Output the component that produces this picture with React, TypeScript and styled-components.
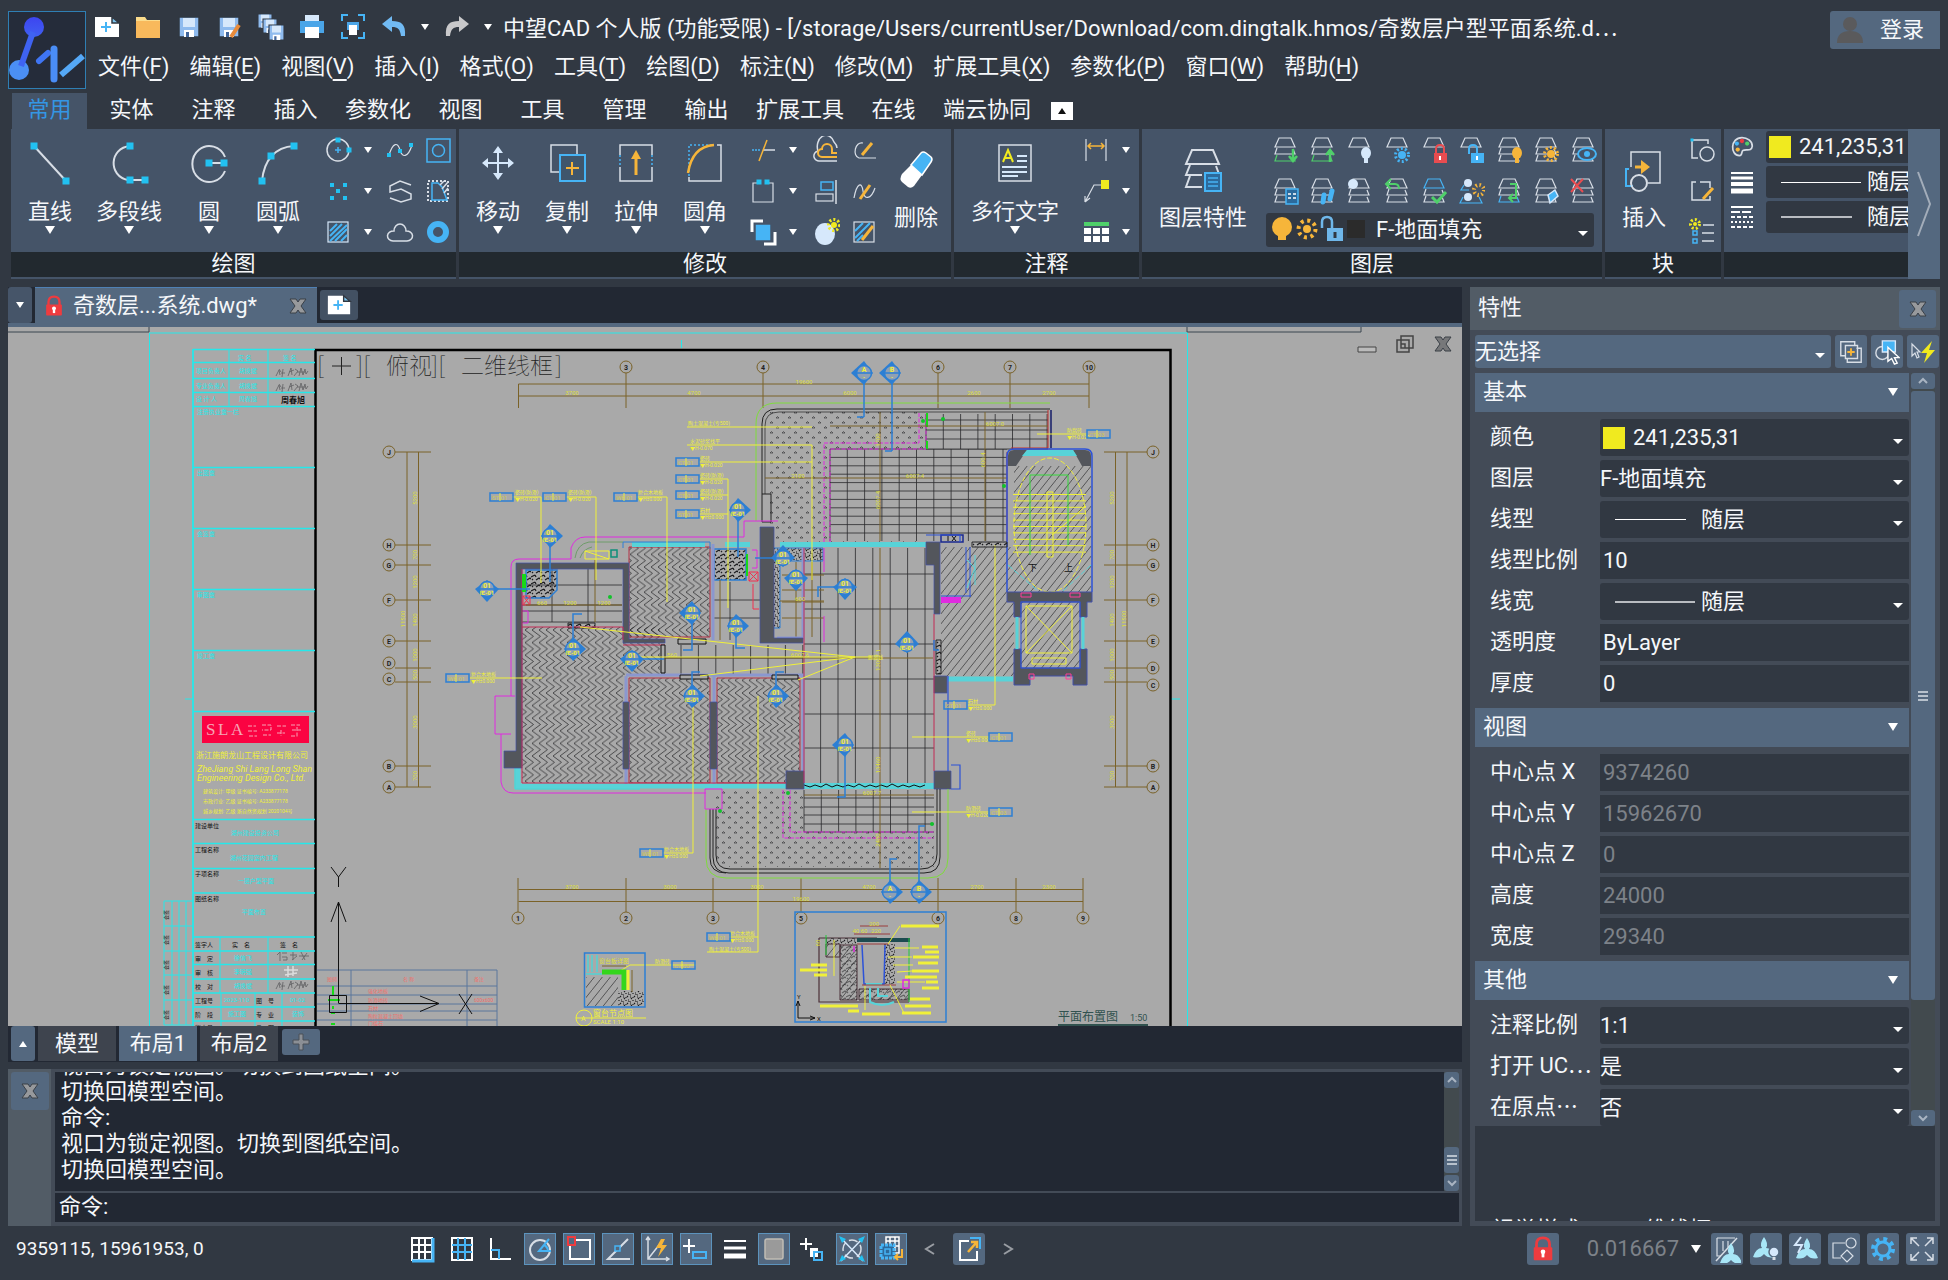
import React, { ReactNode, useState } from "react";
import styled, { createGlobalStyle } from "styled-components";

const c = {
  bg: "#313842",
  dark: "#222833",
  ribbon: "#455468",
  caption: "#22292f",
  accent: "#54687f",
  strip: "#525c66",
  panel: "#434b57",
  text: "#f5f7fa",
  dim: "#7d8289",
  cyan: "#22c1f1",
  sky: "#46b4f5",
  pale: "#d6e8fb",
  orange: "#f6b53a",
  yellow: "#f0ea1f",
  green: "#4fd06a",
  red: "#ee3b3f",
  line: "#d8dee6",
};
const sans = `Roboto, "Noto Sans CJK SC", sans-serif`;
const cjk = `"Noto Sans CJK SC", sans-serif`;

const Global = createGlobalStyle`
  *, *::before, *::after { box-sizing: border-box; }
  body { margin: 0; background: ${c.bg}; color: ${c.text}; font-family: ${sans}; font-size: 22px; line-height: 28px; }
  button, input, select { font: inherit; color: inherit; border: 0; margin: 0; padding: 0; background: none; border-radius: 0; }
  button { cursor: pointer; }
  svg { display: block; }
`;

/* ---------- shared parts ---------- */

const Ico = ({ size, box = size, children }: { size: number; box?: number; children: ReactNode }) => (
  <svg width={size} height={size} viewBox={`0 0 ${box} ${box}`} fill="none" stroke={c.line} strokeWidth={1.5} aria-hidden="true">
    {children}
  </svg>
);

const Triangle = styled.span<{ $up?: boolean; $small?: boolean }>`
  display: block;
  width: 0;
  height: 0;
  border: solid transparent;
  border-width: ${(p) => (p.$small ? "6px 4px" : "8px 5px")};
  ${(p) => (p.$up ? "border-top-width: 0; border-bottom-color: #fff;" : "border-bottom-width: 0; border-top-color: #fff;")}
`;

const Ellipsis = styled.span`
  font-family: ${cjk};
  line-height: 1;
`;

const Cross = ({ color = "#97999c" }: { color?: string }) => (
  <Ico size={20}>
    <path d="M2 3h6l2 3 2-3h6l-5 7 5 7h-6l-2-3-2 3H2l5-7z" fill={color} stroke="#3b4047" strokeWidth={1} />
  </Ico>
);

/* ---------- page frame ---------- */

const Page = styled.div`
  min-height: 100vh;
  display: flex;
  flex-direction: column;
  padding: 11px 8px 0;
`;

const Header = styled.header`
  display: flex;
  height: 82px;
`;
const Logo = styled.div`
  width: 78px;
  height: 78px;
  flex: none;
  border: 1px solid #2f7fb4;
  background: #252c3a;
`;
const HeadRows = styled.div`
  flex: 1;
  min-width: 0;
`;
const TopRow = styled.div`
  display: flex;
  align-items: center;
  height: 38px;
`;
const QuickBar = styled.div`
  display: flex;
  padding-bottom: 6px;
`;
const QuickButton = styled.button<{ $narrow?: boolean }>`
  width: ${(p) => (p.$narrow ? 22 : 41)}px;
  height: 28px;
  display: grid;
  place-items: center;
`;
const Title = styled.h1`
  flex: 1;
  min-width: 0;
  margin: 0 0 0 4px;
  padding-bottom: 2px;
  font-size: 22px;
  font-weight: 400;
  line-height: 34px;
  white-space: nowrap;
  overflow: hidden;
`;
const Login = styled.button`
  width: 110px;
  height: 38px;
  background: ${c.accent};
  border-radius: 3px 0 0 3px;
  display: flex;
  align-items: center;
  justify-content: space-between;
  padding: 0 16px 0 5px;
`;
const MenuBar = styled.nav`
  display: flex;
  gap: 20px;
  height: 36px;
  align-items: center;
  padding-left: 12px;
`;
const MenuItem = styled.button`
  white-space: nowrap;
  u {
    text-underline-offset: 5px;
    text-decoration-thickness: 2px;
  }
`;

const Tabs = styled.div`
  display: flex;
  gap: 7px;
  padding-left: 4px;
  align-items: center;
`;
const Tab = styled.button<{ $on?: boolean }>`
  min-width: 75px;
  height: 36px;
  padding: 0 5px 2px;
  white-space: nowrap;
  color: ${(p) => (p.$on ? "#3496e4" : c.text)};
  background: ${(p) => (p.$on ? c.ribbon : "transparent")};
`;
const Collapse = styled.button`
  width: 22px;
  height: 18px;
  margin-left: 8px;
  background: #fff;
  display: grid;
  place-items: center;
  span {
    border-bottom-color: #111;
  }
`;

/* ---------- ribbon ---------- */

const Ribbon = styled.div`
  display: flex;
  gap: 3px;
  padding-left: 3px;
`;
const Panel = styled.section<{ $w?: number }>`
  ${(p) => (p.$w ? `width: ${p.$w}px; flex: none;` : "flex: 1; min-width: 0; overflow: hidden; margin-right: -3px;")}
  background: ${c.ribbon};
  padding-bottom: 2px;
`;
const PanelBody = styled.div`
  display: flex;
  height: 123px;
`;
const Caption = styled.h2`
  margin: 0;
  height: 25px;
  line-height: 24px;
  font-size: 22px;
  font-weight: 400;
  text-align: center;
  background: ${c.caption};
`;
const BigBtn = styled.button<{ $w: number; $low?: boolean }>`
  width: ${(p) => p.$w}px;
  flex: none;
  display: flex;
  flex-direction: column;
  align-items: center;
  padding-top: ${(p) => (p.$low ? 17 : 11)}px;
  white-space: nowrap;
`;
const BigLabel = styled.span`
  margin-top: 12px;
  line-height: 28px;
`;
const SmallGrid = styled.div<{ $cols: string; $left?: number }>`
  display: grid;
  grid-template-columns: ${(p) => p.$cols};
  grid-template-rows: repeat(3, 41px);
  margin-left: ${(p) => p.$left ?? 0}px;
`;
const SmallBtn = styled.button`
  display: grid;
  place-items: center;
`;

const Big = ({ w, label, icon, menu = true }: { w: number; label: string; icon: ReactNode; menu?: boolean }) => (
  <BigBtn $w={w} $low={!menu}>
    <Ico size={46}>{icon}</Ico>
    <BigLabel>{label}</BigLabel>
    {menu && <Triangle />}
  </BigBtn>
);
const Small = ({ label, icon }: { label: string; icon: ReactNode }) => (
  <SmallBtn aria-label={label}>
    <Ico size={28}>{icon}</Ico>
  </SmallBtn>
);
const More = ({ label }: { label: string }) => (
  <SmallBtn aria-label={`${label}选项`}>
    <Triangle $small />
  </SmallBtn>
);

const Node = ({ x, y, s = 7 }: { x: number; y: number; s?: number }) => (
  <rect x={x - s / 2} y={y - s / 2} width={s} height={s} fill={c.cyan} stroke="none" />
);

const bigIcons = {
  line: (<><path d="M7 6l32 35" strokeWidth={2} /><Node x={7} y={6} /><Node x={39} y={41} /></>),
  polyline: (<><path d="M24 6C3 8 2 36 22 40h17" strokeWidth={2} /><Node x={24} y={6} /><Node x={24} y={40} /><Node x={39} y={40} /></>),
  circle: (<><path d="M39 17A17 18 0 1 0 39 31" strokeWidth={2} /><path d="M22 23h16" strokeWidth={2} /><Node x={23} y={23} /><Node x={38} y={23} /></>),
  arc: (<><path d="M7 41C9 20 20 7 39 6" strokeWidth={2} /><Node x={7} y={41} /><Node x={16} y={16} /><Node x={39} y={6} /></>),
  move: (<path d="M23 6l-5 7h4v9h-9v-4l-6 5 6 5v-4h9v9h-4l5 7 5-7h-4v-9h9v4l6-5-6-5v4h-9v-9h4z" fill={c.pale} stroke="none" />),
  copy: (<><path d="M33 15V5H7v27h8" /><rect x="16" y="15" width="25" height="26" fill="#3f566c" stroke={c.sky} strokeWidth={2} /><path d="M28 22v13M22 28h13" stroke={c.orange} strokeWidth={2} /></>),
  stretch: (<><path d="M7 15V5h32v10M7 27v14h32V27" /><path d="M7 15v12M39 15v12" stroke={c.sky} strokeDasharray="2 2" /><path d="M23 35V16" stroke={c.orange} strokeWidth={3} /><path d="M18 19l5-9 5 9z" fill={c.orange} stroke="none" /></>),
  fillet: (<><path d="M7 37v4h32V5h-4" strokeWidth={1.5} /><path d="M7 36V5h24" stroke={c.sky} strokeDasharray="2 2" /><path d="M6 33C9 14 18 6 32 5" stroke={c.orange} strokeWidth={2.5} /></>),
  erase: (<><path d="M9 28l9-9 11 10-8 11q-3 3-6 1l-6-5q-3-3 0-8z" fill="#fff" stroke="none" /><path d="M18 19L28 7q2-2 5 0l5 4q2 2 0 5l-9 13z" fill={c.sky} stroke="#fff" /></>),
  mtext: (<><rect x="7" y="5" width="32" height="36" strokeWidth={1.5} /><path d="M11 22l5-12 5 12M12 18h8" stroke={c.yellow} strokeWidth={2} /><path d="M25 16h10M25 21h10M10 27h25M10 32h25M10 36h16" stroke={c.pale} strokeWidth={2} /></>),
  layers: (<><path d="M12 4h21l6 14H6zM10 19l-4 10h16M10 30L6 41h16M36 20l3 8" strokeWidth={2} /><rect x="25" y="27" width="16" height="18" fill="#2c6a9c" stroke={c.sky} strokeWidth={2} /><path d="M28 32h10M28 36h10M28 40h10" stroke={c.sky} /></>),
  insert: (<><path d="M10 21V6h29v31H27" strokeWidth={1.5} /><path d="M8 23H5v17h7" stroke={c.sky} strokeWidth={2} /><circle cx="18" cy="37" r="8" strokeWidth={2} /><path d="M14 21h10" stroke={c.orange} strokeWidth={3} /><path d="M20 14l9 7-9 7z" fill={c.orange} stroke="none" /></>),
};

const trap = (y: number) => `M8 ${y}h12l4 9H4z`;
const Stack = ({ n = 3, tint, low, children }: { n?: number; tint?: string; low?: string; children?: ReactNode }) => (
  <>
    <path d={trap(2)} strokeWidth={1.2} stroke={tint || c.line} />
    {n > 1 && <path d="M6 12l-2 6h20l-2-5" strokeWidth={1.2} />}
    {n > 2 && <path d="M6 19l-2 6h20l-2-5" strokeWidth={1.2} stroke={low || tint || c.line} />}
    {children}
  </>
);
const Bulb = ({ x, y, fill }: { x: number; y: number; fill: string }) => (
  <g stroke="none" fill={fill}><ellipse cx={x} cy={y} rx="5" ry="6" /><rect x={x - 2} y={y + 5} width="4" height="5" /></g>
);
const Sun = ({ x, y, r = 4, fill }: { x: number; y: number; r?: number; fill: string }) => (
  <g stroke={fill}><circle cx={x} cy={y} r={r} fill={fill} stroke="none" /><circle cx={x} cy={y} r={r + 2.5} strokeDasharray="2 2.1" strokeWidth={3} /></g>
);
const Padlock = ({ x, y, fill, open }: { x: number; y: number; fill: string; open?: boolean }) => (
  <g><path d={open ? `M${x - 8} ${y + 1}v-5q0-4 4-4t4 4v4` : `M${x - 4} ${y}v-4q0-4 4-4t4 4v4`} stroke={fill} strokeWidth={2} /><rect x={x - 6} y={y} width="13" height="10" fill={fill} stroke="none" /><path d={`M${x} ${y + 3}v4`} stroke="#fff" strokeWidth={2} /></g>
);
const Pen = ({ d = "M10 22L22 6" }: { d?: string }) => <path d={d} stroke={c.orange} strokeWidth={3} />;

const s = {
  circle2: (<><circle cx="14" cy="14" r="11" /><path d="M14 11v6M11 14h6" stroke={c.sky} /><Node x={14} y={4} s={5} /><Node x={25} y={14} s={5} /></>),
  spline: (<><path d="M3 19C7 6 12 6 14 14s8 8 12-5" strokeWidth={1.2} /><Node x={3} y={19} s={4} /><Node x={14} y={15} s={4} /><Node x={25} y={9} s={4} /></>),
  region: (<><rect x="3" y="3" width="23" height="23" stroke={c.sky} /><circle cx="14.5" cy="14.5" r="6" stroke={c.sky} /></>),
  points: (<><Node x={8} y={8} s={4} /><Node x={21} y={8} s={4} /><Node x={14} y={14} s={4} /><Node x={8} y={21} s={4} /><Node x={21} y={21} s={4} /></>),
  helix: <path d="M25 8L14 4 4 9v6l11-3 10 5v5l-10 3-11-4" />,
  boundary: (<><rect x="4" y="4" width="20" height="20" strokeDasharray="2 2" strokeWidth={2} /><path d="M8 6v17h15l-5-13-4-4z" fill={c.ribbon} stroke={c.sky} /><path d="M16 8l4-4M18 12l6-7M20 16l4-5" /></>),
  hatch: (<><rect x="4" y="4" width="20" height="20" stroke={c.pale} strokeWidth={1.2} /><path d="M6 13l7-7M6 18L18 6M6 23L23 7M11 23l12-12M17 23l6-6" stroke={c.sky} strokeWidth={2} /></>),
  cloud: <path d="M7 23a6 5 0 0 1 1-10 6 7 0 0 1 12 0 6 5 0 0 1 1 10z" />,
  donut: <circle cx="14" cy="14" r="8" stroke={c.sky} strokeWidth={6} />,
  trim: (<><path d="M3 14h9" stroke={c.sky} strokeDasharray="2 1" /><path d="M14 14h12" /><path d="M10 25L18 4" stroke={c.orange} /></>),
  array: (<><path d="M8 6H4v19h20V6h-4" strokeWidth={1.2} /><Node x={10} y={5} s={5} /><Node x={18} y={5} s={5} /></>),
  order: (<><path d="M3 14V3h11M26 14v12H15" stroke="#fff" strokeWidth={3} /><rect x="6" y="6" width="16" height="17" fill={c.sky} stroke={c.ribbon} /></>),
  offset: (<><path d="M25 25H8a5 5 0 0 1-2-10 7 9 0 0 1 16-9q3 3 3 6" /><path d="M25 21H10a4 4 0 0 1 0-8 5 5 0 0 1 10 0v4h5" stroke={c.orange} strokeWidth={2} /></>),
  align: (<><rect x="9" y="5" width="12" height="8" stroke={c.sky} /><rect x="4" y="17" width="17" height="7" strokeWidth={1.2} /><path d="M24 3v24" /></>),
  explode: (<><ellipse cx="13" cy="16" rx="10" ry="11" fill={c.pale} stroke="none" /><Sun x={22} y={7} r={3} fill={c.yellow} /></>),
  editPoly: (<><path d="M13 7C5 5 2 20 9 22h17" strokeWidth={1.2} /><Pen d="M12 19L22 7" /></>),
  editSpline: (<><path d="M4 21C7 5 12 5 13 14s8 9 12-3" strokeWidth={1.2} /><Pen d="M10 22L20 8" /></>),
  editHatch: (<><rect x="4" y="4" width="20" height="20" strokeWidth={1.2} /><path d="M5 13l8-8M5 20L20 5M7 23l6-6" stroke={c.sky} strokeWidth={2} /><Pen d="M12 22L23 8" /></>),
  dim: (<><path d="M4 3v22M24 3v22" strokeWidth={1.2} /><path d="M6 10h16M9 7l-3 3 3 3M19 7l3 3-3 3" stroke={c.orange} /></>),
  leader: (<><path d="M3 25l9-17h8M3 25v-6M3 25l5-4" strokeWidth={1.2} /><rect x="19" y="3" width="8" height="9" fill={c.yellow} stroke="none" /></>),
  table: (<g stroke="none"><rect x="2" y="4" width="25" height="4" fill={c.green} /><path d="M2 10h7v6H2zM11 10h7v6h-7zM20 10h7v6h-7zM2 18h7v6H2zM11 18h7v6h-7zM20 18h7v6h-7z" fill="#fff" /></g>),
};

const layerIcons: [string, ReactNode][] = [
  ["图层下移", <Stack low={c.green}><path d="M22 13v10M18 20l4 5 4-5" stroke={c.green} strokeWidth={2.5} /></Stack>],
  ["图层上移", <Stack low={c.green}><path d="M22 26V16M18 19l4-5 4 5" stroke={c.green} strokeWidth={2.5} /></Stack>],
  ["关闭图层", <Stack n={1}><Bulb x={21} y={17} fill={c.pale} /></Stack>],
  ["冻结图层", <Stack n={1}><Sun x={19} y={19} fill={c.sky} /></Stack>],
  ["锁定图层", <Stack n={1}><Padlock x={20} y={17} fill="#e84c50" /></Stack>],
  ["解锁图层", <Stack n={1}><Padlock x={20} y={17} fill={c.sky} open /></Stack>],
  ["打开图层", <Stack><Bulb x={22} y={17} fill={c.orange} /></Stack>],
  ["解冻图层", <Stack><Sun x={19} y={18} fill={c.orange} /></Stack>],
  ["隔离图层", <Stack><ellipse cx="18" cy="18" rx="9" ry="6" fill={c.ribbon} stroke={c.sky} strokeWidth={2} /><circle cx="18" cy="18" r="3" fill={c.sky} stroke="none" /></Stack>],
  ["图层状态", <Stack><rect x="15" y="12" width="12" height="15" fill="#2c6a9c" stroke={c.sky} /><path d="M17 17h3M22 17h3M17 21h3M22 21h3" stroke="#fff" /></Stack>],
  ["图层漫游", <Stack><path d="M16 18l-1 7M24 14l-2 8" stroke={c.sky} strokeWidth={5} strokeLinecap="round" /></Stack>],
  ["匹配图层", <Stack><circle cx="8" cy="7" r="5" fill={c.pale} stroke="none" /></Stack>],
  ["上一图层", <Stack><path d="M8 2L3 7l5 5M4 7h8q4 0 4 5" stroke={c.green} strokeWidth={2} /></Stack>],
  ["置为当前", <Stack tint={c.sky} low={c.line}><path d="M12 20l5 5 9-10" stroke={c.green} strokeWidth={3} /></Stack>],
  ["图层合并", <><path d="M7 8l-3 5h8M6 20l-3 6h22l-3-6" strokeWidth={1.2} stroke={c.sky} /><circle cx="11" cy="6" r="4" fill={c.pale} stroke="none" /><circle cx="11" cy="20" r="4" fill={c.pale} stroke="none" /><circle cx="22" cy="13" r="5" stroke={c.orange} strokeWidth={4} strokeDasharray="1.5 2.4" /></>],
  ["移至图层", <Stack low={c.sky}><path d="M15 7h6v14h-6M18 17l-4 4 4 4" stroke={c.green} strokeWidth={2} /></Stack>],
  ["复制到图层", <Stack><path d="M16 18l7-5 3 6-8 7z" fill={c.sky} stroke={c.pale} /></Stack>],
  ["删除图层", <Stack><path d="M2 2l12 13M14 2L2 15" stroke="#e84c50" strokeWidth={2} /></Stack>],
];

const LayerArea = styled.div`
  flex: 1;
  padding: 0 8px 0 2px;
`;
const LayerGrid = styled.div`
  display: grid;
  grid-template-columns: repeat(9, 1fr);
  grid-template-rows: 41px 41px;
  margin: 0 -8px 2px 0;
`;
const Field = styled.div<{ $h?: number; $flat?: boolean; $blue?: boolean }>`
  position: relative;
  display: flex;
  align-items: center;
  height: ${(p) => p.$h ?? 37}px;
  min-width: 0;
  flex: 1;
  background: ${(p) => (p.$blue ? c.accent : c.bg)};
  border-radius: ${(p) => (p.$flat ? 0 : 3)}px;
`;
const Caret = styled.span`
  position: absolute;
  right: 6px;
  top: calc(50% + 1px);
  border: 5px solid transparent;
  border-bottom-width: 0;
  border-top-color: #fff;
  pointer-events: none;
`;
const Select = styled.select`
  appearance: none;
  flex: 1;
  min-width: 0;
  height: 100%;
  padding: 0 16px 0 0;
`;
const Swatch = styled.span`
  width: 22px;
  height: 22px;
  flex: none;
  margin: 0 8px 0 3px;
  background: ${c.yellow};
`;
const LineSlot = styled.span<{ $len: number; $thick?: boolean }>`
  width: 86px;
  flex: none;
  margin-left: 15px;
  &::before {
    content: "";
    display: block;
    width: ${(p) => p.$len}px;
    height: ${(p) => (p.$thick ? 2 : 1)}px;
    background: ${(p) => (p.$thick ? "#b9bcc1" : "#fff")};
  }
`;
const PropFields = styled.div`
  display: grid;
  grid-template-columns: 24px 190px;
  grid-template-rows: repeat(3, 32px);
  gap: 3px 12px;
  padding: 2px 0 0 6px;
  align-items: center;
`;
const ScrollRight = styled.button`
  width: 32px;
  flex: none;
  background: ${c.accent};
  display: grid;
  place-items: center;
  position: relative;
`;

/* ---------- work area ---------- */

const Work = styled.main`
  flex: 1;
  display: flex;
  gap: 8px;
  padding-top: 8px;
`;
const Left = styled.div`
  flex: 1;
  min-width: 0;
  display: flex;
  flex-direction: column;
`;
const DocBar = styled.div`
  display: flex;
  gap: 3px;
  height: 40px;
  background: ${c.dark};
  border-bottom: 4px solid ${c.accent};
`;
const DocMenu = styled.button`
  width: 24px;
  height: 36px;
  background: #465569;
  border-radius: 3px;
  display: grid;
  place-items: center;
`;
const DocTab = styled.div`
  width: 282px;
  height: 40px;
  background: ${c.accent};
  border-top: 1px solid #4f80b4;
  display: flex;
  align-items: center;
  padding: 0 9px 4px 8px;
`;
const DocName = styled.button`
  flex: 1;
  display: flex;
  align-items: center;
  gap: 8px;
  white-space: nowrap;
`;
const SquareBtn = styled.button<{ $w: number; $h: number }>`
  width: ${(p) => p.$w}px;
  height: ${(p) => p.$h}px;
  flex: none;
  background: ${c.accent};
  border-radius: 3px;
  display: grid;
  place-items: center;
`;
const NewDoc = styled(SquareBtn)`
  background: #435163;
  margin-top: 3px;
`;
const NewLayout = styled(SquareBtn)`
  margin: 3px 0 0 1px;
`;
const Canvas = styled.div`
  position: relative;
  flex: 1;
  min-height: 500px;
  background: #a9a9a9;
  overflow: hidden;
  > svg {
    position: absolute;
    inset: 0;
    width: 100%;
    height: 100%;
  }
`;
const WinButtons = styled.div`
  position: absolute;
  top: 5px;
  right: 5px;
  display: flex;
  gap: 10px;
  button {
    width: 28px;
    height: 24px;
    display: grid;
    place-items: center;
  }
`;
const LayoutBar = styled.div`
  display: flex;
  gap: 3px;
  height: 36px;
  padding-left: 3px;
  background: ${c.dark};
`;
const LayoutTab = styled.button<{ $on?: boolean }>`
  width: 78px;
  height: 35px;
  background: ${(p) => (p.$on ? c.accent : "#3e444e")};
`;
const Command = styled.section`
  display: flex;
  height: 157px;
  margin-top: 7px;
  background: ${c.panel};
`;
const CommandSide = styled.div`
  width: 43px;
  background: ${c.strip};
  padding: 3px;
`;
const CommandBody = styled.div`
  flex: 1;
  padding: 3px 3px 4px 4px;
`;
const History = styled.div`
  height: 119px;
  background: ${c.dark};
  display: flex;
`;
const Lines = styled.div`
  flex: 1;
  display: flex;
  flex-direction: column;
  justify-content: flex-end;
  overflow: hidden;
  padding: 0 6px 8px;
  line-height: 26px;
  p {
    margin: 0;
    flex: none;
  }
`;
const Prompt = styled.label`
  display: flex;
  height: 29px;
  margin-top: 2px;
  padding-left: 4px;
  background: ${c.dark};
  line-height: 27px;
  input {
    flex: 1;
    outline: 0;
  }
`;
const Scroll = styled.div<{ $w: number }>`
  width: ${(p) => p.$w}px;
  flex: none;
  display: flex;
  flex-direction: column;
  background: #424a4e;
`;
const ScrollBtn = styled.button`
  height: 16px;
  flex: none;
  background: ${c.accent};
  border-radius: 3px;
  display: grid;
  place-items: center;
`;
const Thumb = styled.div<{ $size: number }>`
  flex: ${(p) => p.$size} 0 0;
  background: ${c.accent};
  border-radius: 3px;
  display: grid;
  place-items: center;
  margin: 2px 0;
`;
const Spring = styled.div<{ $n: number }>`
  flex: ${(p) => p.$n} 0 0;
`;
const Chevron = ({ up }: { up?: boolean }) => (
  <Ico size={14}><path d={up ? "M3 9l4-4 4 4" : "M3 5l4 4 4-4"} strokeWidth={2} stroke="#a9b4c2" /></Ico>
);
const Grip = () => (<Ico size={12}><path d="M1 2h10M1 6h10M1 10h10" strokeWidth={1.5} /></Ico>);

/* ---------- properties ---------- */

const Props = styled.aside`
  width: 470px;
  flex: none;
  display: flex;
  flex-direction: column;
  background: ${c.panel};
  padding-bottom: 5px;
`;
const PropsTitle = styled.div`
  display: flex;
  justify-content: space-between;
  align-items: center;
  height: 43px;
  padding: 0 4px 0 8px;
  background: ${c.strip};
  h2 {
    margin: 0;
    font-size: 22px;
    font-weight: 400;
    line-height: 36px;
    padding-bottom: 2px;
  }
`;
const PickRow = styled.div`
  display: flex;
  gap: 4px;
  padding: 5px 1px 5px 5px;
`;
const PropsBody = styled.div`
  display: flex;
  gap: 2px;
  padding: 0 5px;
`;
const Groups = styled.div`
  flex: 1;
  min-width: 0;
`;
const GroupHead = styled.button`
  width: 100%;
  height: 39px;
  display: flex;
  align-items: center;
  justify-content: space-between;
  padding: 0 11px 1px 8px;
  background: ${c.accent};
`;
const Rows = styled.div<{ $last?: boolean }>`
  display: grid;
  gap: 4px;
  padding: 7px 0 ${(p) => (p.$last ? 0 : 6)}px;
`;
const Row = styled.div`
  display: grid;
  grid-template-columns: 125px 1fr;
  align-items: center;
  label {
    height: 29px;
    padding: 0 0 1px 15px;
    white-space: nowrap;
    overflow: hidden;
  }
`;
const Value = styled.input`
  flex: 1;
  min-width: 0;
  height: 100%;
  padding: 0 3px;
  &:disabled {
    color: ${c.dim};
  }
`;
const Rest = styled.div`
  flex: 1;
  min-height: 0;
  margin: 0 5px;
  background: ${c.bg};
  display: flex;
  flex-direction: column;
  justify-content: flex-end;
  overflow: hidden;
`;
const CutRow = styled.div`
  display: grid;
  grid-template-columns: 131px 1fr;
  padding-left: 17px;
  height: 5px;
  overflow: hidden;
`;

/* ---------- status bar ---------- */

const Status = styled.footer`
  display: flex;
  align-items: center;
  height: 54px;
  padding: 0 2px 8px 8px;
`;
const Coords = styled.output`
  width: 391px;
  font-size: 19px;
`;
const StatusGroup = styled.div`
  display: flex;
  gap: 7px;
`;
const StatusBtn = styled.button<{ $on?: boolean; $flat?: boolean }>`
  width: 32px;
  height: 32px;
  display: grid;
  place-items: center;
  background: ${(p) => (p.$on || p.$flat ? c.accent : "transparent")};
  border: ${(p) => (p.$on ? "1px solid #5c93bd" : "0")};
  border-radius: ${(p) => (p.$flat ? 3 : 0)}px;
`;
const Spacer = styled.div`
  flex: 1;
`;
const Scale = styled.button`
  display: flex;
  align-items: center;
  gap: 12px;
  margin: 0 10px 0 28px;
  color: ${c.dim};
`;

/* ---------- drawing ---------- */

const AX = "#7a6228";
const YL = "#f0f03a";
const BL = "#2c7fd4";
const MG = "#e02be0";
const CY = "#25e8ea";
const GLASS = "#58d3d8";
const WALL = "#53565c";
const INK = "#2a2a2c";

const range = (from: number, to: number, step: number) => {
  const out: number[] = [];
  for (let v = from; v <= to + 0.01; v += step) out.push(Math.round(v * 10) / 10);
  return out;
};
const vlines = (xs: number[], y1: number, y2: number) => xs.map((x) => `M${x} ${y1}V${y2}`).join("");
const hlines = (ys: number[], x1: number, x2: number) => ys.map((y) => `M${x1} ${y}H${x2}`).join("");

const Bubble = ({ x, y, t }: { x: number; y: number; t: string }) => (
  <g>
    <circle cx={x} cy={y} r="6" stroke={AX} />
    <text x={x} y={y + 2.5} fontSize="7" fontWeight="700" fill="#222" stroke="none" textAnchor="middle">{t}</text>
  </g>
);
const Marker = ({ x, y, t, dir = 0 }: { x: number; y: number; t?: string; dir?: number }) => (
  <g>
    <path d={`M${x - 12} ${y}L${x} ${y + 13}L${x + 12} ${y}L${x} ${y - 9}z`} fill={BL} stroke="none" transform={`rotate(${dir} ${x} ${y})`} />
    <circle cx={x} cy={y} r="7.500" fill="#8fa0b4" stroke={BL} strokeWidth={1.500} />
    <path d={`M${x - 7} ${y}h14`} stroke={BL} strokeWidth={1.500} />
    <text x={x} y={y - 1} fontSize="7" fontWeight="700" fill={YL} stroke="none" textAnchor="middle">{t || "01"}</text>
    <text x={x} y={y + 6} fontSize="6" fontWeight="700" fill={YL} stroke="none" textAnchor="middle">{t ? "-" : "IE-01"}</text>
  </g>
);
const Tag = ({ x, y, t = "CT 01" }: { x: number; y: number; t?: string }) => (
  <g>
    <rect x={x} y={y} width="23" height="8" stroke={BL} strokeWidth={1.500} />
    <path d={`M${x + 10} ${y}v8`} stroke={YL} />
    <text x={x + 2} y={y + 6.5} fontSize="6" fill="#c9c95a" stroke="none">{t}</text>
  </g>
);
const Note = ({ x, y, t, sub }: { x: number; y: number; t: string; sub?: string }) => (
  <g fill={YL} stroke="none" fontSize="5">
    <text x={x} y={y - 1}>{t}</text>
    {sub && <text x={x} y={y + 6}>{sub}</text>}
  </g>
);
const Dim = ({ x, y, t, v }: { x: number; y: number; t: string; v?: boolean }) => (
  <text x={x} y={y} fontSize="6" fill="#dede3c" stroke="none" textAnchor="middle" transform={v ? `rotate(-90 ${x} ${y})` : undefined}>{t}</text>
);

const axisRows: [string, number][] = [["J", 452], ["H", 545], ["G", 565], ["F", 600], ["E", 641], ["D", 668], ["C", 682], ["B", 766], ["A", 787]];
const topAxis: [string, number][] = [["3", 626], ["4", 763], ["6", 938], ["7", 1010], ["10", 1089]];
const bottomAxis: [string, number][] = [["1", 518], ["2", 626], ["3", 713], ["5", 801], ["6", 938], ["8", 1016], ["9", 1083]];

const Patterns = () => (
  <defs>
    <pattern id="herring" width="7" height="12.600" patternUnits="userSpaceOnUse">
      <path d="M0 0l8.500 6.300L0 12.600M-7 0l8.500 6.300L-7 12.600" stroke="#2e2e30" strokeWidth="0.800" />
    </pattern>
    <pattern id="diag" width="8" height="10" patternUnits="userSpaceOnUse">
      <path d="M-1 11.2L9 -1.2M-5 6L4 -5M4 15L13 4" stroke="#3c3c3e" strokeWidth="0.800" />
    </pattern>
    <pattern id="dots" width="12" height="10" patternUnits="userSpaceOnUse">
      <path d="M2 3l1.500-1.500l1.500 1.500zM8 8l1.500-1.500l1.500 1.500z" stroke="#3c3c3e" strokeWidth="0.700" />
    </pattern>
    <pattern id="speck" width="7" height="7" patternUnits="userSpaceOnUse">
      <path d="M0 1h1M4 2l1 1M1 5l1-1M5 6h1M3 3v1M6 0v1M0 3h1M3 6v1" stroke="#1d1d20" strokeWidth="1.200" />
    </pattern>
    <pattern id="marble" width="9" height="7" patternUnits="userSpaceOnUse">
      <path d="M0 3l4-2M5 6l3-2 1 1M4 1l1 2M1 6l1-1" stroke="#1d1d20" strokeWidth="1.300" fill="none" />
    </pattern>
  </defs>
);

const Sheet = () => (
  <g>
    <path d="M8 332H149V327M1187 327v5h174v-5" stroke="#3b4650" />
    <path d="M149.500 1026V333H1187.500V1026M681.500 340v8M1171 699h9M185 699h8" stroke={CY} />
    <path d="M315.500 1026V350H1170.500V1026" stroke="#000" strokeWidth="2.500" />
    <path d="M193 1026V349" stroke={CY} strokeWidth="1.800" />
    <path d={hlines([349.5, 362.5, 378.5, 392.5, 406.5, 467.5, 528.5, 589.5, 650.5, 711.5, 819.5, 843.5, 868.5, 893, 937, 951, 964.5, 979, 993, 1007, 1021], 193, 315)} stroke={CY} strokeWidth="1.400" />
    <path d="M229 349V406M268 349V406M220 937V993M268 937V993M221 993V1026M255 993V1026M282 993V1026" stroke={CY} />
    <path d={vlines([164, 172, 179, 186], 901, 1025) + hlines([901, 926, 951, 975, 1000, 1025], 164, 193)} stroke={CY} />
    <g fill={CY} stroke="none" fontSize="6">
      <text x="238" y="360">实  名</text><text x="283" y="360">签  名</text>
      <text x="196" y="373">项目负责人</text><text x="239" y="373">胡焕斌</text>
      <text x="196" y="388">专业负责人</text><text x="239" y="388">胡焕斌</text>
      <text x="196" y="401">设 计 人</text><text x="239" y="401">周春旭</text>
      <text x="197" y="414">注册执业章一栏</text>
      <text x="197" y="475">出图章</text><text x="197" y="536">会签章</text><text x="197" y="597">审图章</text><text x="197" y="658">竣工章</text>
      <text x="231" y="835">湖州建设投资公司</text><text x="230" y="860">湖州花园室内工程</text>
      <text x="238" y="883">一层户型平面</text><text x="242" y="914">平面布置</text>
      <text x="234" y="960">徐信飞</text><text x="234" y="974">李明强</text><text x="234" y="988">胡焕斌</text>
      <text x="224" y="1002">2023-110</text><text x="290" y="1002">01-02</text>
      <text x="228" y="1016">施工图</text><text x="292" y="1016">装饰</text>
    </g>
    <g fill="#111" stroke="none" fontSize="6">
      <text x="195" y="828">建设单位</text><text x="195" y="852">工程名称</text><text x="195" y="876">子项名称</text><text x="195" y="901">图纸名称</text>
      <text x="195" y="947">签字人</text><text x="232" y="947">实</text><text x="244" y="947">名</text><text x="280" y="947">签</text><text x="292" y="947">名</text>
      <text x="195" y="961">审</text><text x="207" y="961">定</text><text x="195" y="975">审</text><text x="207" y="975">核</text><text x="195" y="989">校</text><text x="207" y="989">对</text>
      <text x="195" y="1003">工程号</text><text x="256" y="1003">图</text><text x="268" y="1003">号</text>
      <text x="195" y="1017">阶</text><text x="207" y="1017">段</text><text x="256" y="1017">专</text><text x="268" y="1017">业</text>
      <text x="195" y="1030">版本号</text><text x="256" y="1030">日</text><text x="268" y="1030">期</text>
      <text x="281" y="403" fontSize="8" fontWeight="700">周春旭</text>
      {[915, 940, 965, 990, 1015].map((y) => <text key={y} x="168" y={y} fontSize="5" transform={`rotate(-90 168 ${y})`} textAnchor="middle">会签</text>)}
    </g>
    <g stroke="#68686a" strokeWidth="0.900">
      {[372, 387, 985].map((y) => (
        <path key={y} d={`M276 ${y + 4}l3-6 1 5M279 ${y - 3}l2 3M283 ${y - 3}l-1 8M281 ${y + 1}h4M288 ${y + 4}l3-8 1 7M289 ${y}l5-2M295 ${y - 3}l3 2-4 5M299 ${y + 4}l2-8 2 7 2-6 1 5 2-3M297 ${y}h8`} />
      ))}
      <path d="M277 955l3-3v9M282 953h5M282 957h5M283 960h4v-3M293 952v8M290 955h7M292 960l5-4M301 952l4 8M302 960l5-7M299 956h10" />
      <path d="M284 970h14M288 966v11M293 966v10M285 975l12-2" stroke="#dcdcdc" strokeWidth="1.500" />
    </g>
    <rect x="202" y="716" width="107" height="27" fill="#fb0342" stroke="none" />
    <text x="206 218 231" y="735" fontSize="17" fill="#f7a3b5" stroke="none" fontFamily="Liberation Serif">SLA</text>
    <path d="M248 726h8M248 731h9M249 736h8M262 725h9v5h-9M263 735h8M277 726h9M281 730v6M277 733h8M291 725h9M292 730h9M297 727v10M291 736h4" stroke="#f7a3b5" strokeDasharray="4 1.500" />
    <g fill={YL} stroke="none">
      <text x="196" y="758" fontSize="8">浙江施朗龙山工程设计有限公司</text>
      <g fontStyle="italic" fontSize="9"><text x="197" y="772">ZheJiang Shi Lang Long Shan</text><text x="197" y="781">Engineering Design Co., Ltd.</text></g>
      <g fontSize="5"><text x="203" y="793">建筑设计: 甲级 证书编号: A233877178</text><text x="203" y="803">市政行业: 乙级 证书编号: A233877178</text><text x="203" y="813">城乡规划: 乙级 浙自然资规划 2020104号</text></g>
    </g>
  </g>
);

const Axes = () => (
  <g>
    <g stroke={AX}>
      <path d="M407 452V787M418.500 452V787M1115.500 452V787M1127 452V787" />
      {axisRows.map(([t, y]) => <path key={t} d={`M395 ${y}H431M1104 ${y}H1147`} />)}
      <path d="M518.500 384V408M518.500 384H1089M518.500 396H1089M518.500 889.500H1083M518.500 901.500H1083" />
      {topAxis.map(([t, x]) => <path key={t} d={`M${x} 373V408`} />)}
      {bottomAxis.map(([t, x]) => <path key={t} d={`M${x} 878V912`} />)}
    </g>
    {axisRows.map(([t, y]) => (<g key={t}><Bubble x={389} y={t === "D" ? 663 : t === "C" ? 679 : y} t={t} /><Bubble x={1153} y={t === "C" ? 685 : y} t={t} /></g>))}
    {topAxis.map(([t, x]) => <Bubble key={t} x={x} y={367} t={t} />)}
    {bottomAxis.map(([t, x]) => <Bubble key={t} x={x} y={918} t={t} />)}
    <Dim x={804} y={384} t="19600" /><Dim x={572} y={395} t="3700" /><Dim x={694} y={395} t="4700" /><Dim x={850} y={395} t="6000" /><Dim x={974} y={395} t="2600" /><Dim x={1049} y={395} t="2700" />
    <Dim x={572} y={889} t="3700" /><Dim x={670} y={889} t="3000" /><Dim x={757} y={889} t="3000" /><Dim x={869} y={889} t="4700" /><Dim x={977} y={889} t="2700" /><Dim x={1049} y={889} t="2300" /><Dim x={801} y={901} t="19600" />
    {[[498, "5200"], [555, "700"], [582, "1200"], [620, "1400"], [655, "1000"], [675, "500"], [722, "3000"], [776, "700"]].map(([y, t]) => (
      <g key={y}><Dim v x={417} y={y as number} t={t as string} /><Dim v x={1114} y={y as number} t={t as string} /></g>
    ))}
    <Dim v x={405} y={619} t="11500" /><Dim v x={1126} y={619} t="11500" />
  </g>
);

const Plan = () => (
  <g>
    {/* upper terrace */}
    <rect x="768" y="412" width="158" height="130" fill="url(#dots)" stroke="none" />
    <path d="M762 494V424q0-15 15-15H1050" stroke="#222" /><path d="M765 494V426q0-14 14-14H1048" stroke="#222" strokeWidth="0.700" />
    <path d="M756 521V424q0-21 21-21H1050" stroke="#7fdc3c" />
    <path d="M762 494h9v28h-9z" stroke="#222" />
    <rect x="830" y="449" width="177" height="92" fill="#a9a9a9" stroke="none" />
    <path d={vlines(range(830, 1006, 17.3), 449, 541) + hlines(range(449, 541, 8.4), 830, 1007)} stroke={INK} strokeWidth="0.800" />
    <rect x="926" y="413" width="122" height="36" fill="#a9a9a9" stroke="none" />
    <path d={vlines(range(926, 1048, 17.3), 414, 449) + hlines([420, 430, 439, 449], 926, 1048)} stroke={INK} strokeWidth="0.800" />
    <path d="M824 542V443H919V413M830 542V449H926V413" stroke={MG} strokeDasharray="4 1.500" />
    <path d="M927 413v14M927 441v8" stroke="#18d818" strokeWidth="2" />
    <path d="M1048 410V448H1011M1007 452V541" stroke="#c23030" /><path d="M1051 410V448" stroke="#3a3f78" strokeWidth="2" />
    <path d="M880 412V541M985 412V541M765 478H1007M830 426H1048" stroke={AX} />
    <Dim x={798} y={478} t="2100" /><Dim x={915} y={478} t="6007.4" /><Dim x={995} y={426} t="6007.0" /><Dim v x={880} y={440} t="1700" /><Dim v x={880} y={500} t="6007.4" /><Dim v x={985} y={460} t="600.4" />

    {/* stairs and lobby */}
    <path d="M941 547H1014V466H1091V600H1014V676H941z" fill="url(#diag)" stroke="none" />
    <path d="M1007 592V456q0-7 7-7H1085q7 0 7 7V592" stroke="#2c52d8" strokeWidth="1.500" />
    <path d="M1008 466V456q0-6 6-6H1027L1016 466zM1091 466V456q0-6-6-6H1073L1082 466z" fill={WALL} stroke="none" />
    <path d="M1027 450H1073l4 6H1022z" fill={GLASS} stroke="none" />
    <ellipse cx="1050" cy="525" rx="36" ry="67" stroke={YL} strokeDasharray="5 2" />
    <path d={hlines(range(494.5, 558, 6.4), 1013, 1086)} stroke={YL} /><path d="M1047 492h6v65h-6zM1052 535l34-29" stroke={YL} />
    <path d="M1030 475V555M1068 475V545M1030 475h38" stroke="#35d83a" /><path d="M1008 565l30 26M1091 565l-28 26" stroke={GLASS} strokeDasharray="6 2" />
    <g fill="#111" stroke="none" fontSize="9"><text x="1028" y="571">下</text><text x="1064" y="571">上</text></g>
    <path d="M1007 592h85v10h-5v15h-7v-15h-59v15h-7v-15h-7zM1014 649h7v19h59v-19h7v36h-14v-9h-43v9h-16z" fill={WALL} stroke="#4350a8" />
    <rect x="1021" y="602" width="59" height="66" fill="url(#diag)" stroke="#2c52d8" />
    <path d="M1017 617v32M1083 617v32" stroke={GLASS} strokeWidth="3" />
    <path d="M1026 606h46v47h-46zM1026 606l46 47M1072 606l-46 47M1032 658h34v6h-34z" stroke={YL} />
    <path d="M1021 593h10v4h-10zM1070 593h10v4h-10zM1029 674h5v5h-5zM1066 674h5v5h-5z" stroke="#ff3d9a" />
    <path d="M948 679H1013" stroke={GLASS} strokeWidth="5" />
    <path d="M966 547v46M970 547v50M941 596h30" stroke="#2c52d8" /><path d="M967 560l8 8-8 20M975 555v30" stroke={GLASS} /><path d="M941 597h20v6h-20z" fill={MG} stroke="none" />
    <path d="M995 545V705" stroke={YL} />

    {/* floor finishes */}
    <path d="M522 627H660V675H623V783H522z" fill="url(#herring)" stroke="none" />
    <path d="M629 547h81v90h-81zM629 678h81v105h-81zM717 678h83v105h-83z" fill="url(#herring)" stroke="#b33045" />
    <path d={vlines([552, 588], 569, 622) + hlines([585, 605, 611], 522, 622) + "M522 622H622"} stroke={INK} strokeWidth="0.800" />
    <path d={vlines([730], 582, 640) + hlines([600, 618], 714, 760)} stroke={INK} strokeWidth="0.800" />
    <path d={vlines(range(681, 803, 17.4), 645, 675) + hlines([658], 665, 803)} stroke={INK} strokeWidth="0.800" />
    <path d={vlines(range(820.6, 934, 17.4), 548, 783) + hlines([574, 609, 644, 679, 714, 748], 804, 934)} stroke={INK} strokeWidth="0.800" />
    <path d={hlines([575, 590, 602, 618], 782, 824) + vlines([796, 812], 562, 637)} stroke={AX} />
    <path d="M767 548h56v13h-43v67h-13z" fill="url(#speck)" stroke={BL} />
    <path d="M714 549h32v31h-32zM526 570h31v20l-8 8h-23z" fill="url(#marble)" stroke={BL} strokeWidth="1.500" />
    <path d="M936 640h5v34h-5zM972 542h35v5h-35zM568 623h27v5h-27z" fill="url(#marble)" stroke={INK} />

    {/* windows and curtain walls */}
    <path d="M632 544.500H705M725 544.500H750M780 544.500H926M535 566H556" stroke={GLASS} strokeWidth="5" />
    <path d="M518 768V786H788" stroke={GLASS} strokeWidth="5" /><path d="M515 768V789H640" stroke={CY} />
    <path d="M804 786H934" stroke={GLASS} strokeWidth="6" /><path d="M804 785l6 2 5-2 6 2 5-3 6 3 5-2 6 2 5-2 6 2 5-3 6 3 5-2 6 2 5-2 6 2 5-3 6 3 5-2 6 2 5-2 6 2 5-2" stroke="#111" />
    <path d="M623 548V542H710V549" stroke={BL} />
    <path d="M714 676V784M626 676V784M626 675H803V783M713 544V640M803 548V638H777" stroke="#8b97cf" strokeWidth="3" />

    {/* walls */}
    <g fill={WALL} stroke="#4350a8" strokeWidth="0.700">
      <path d="M516 563H629V639H665V643H623V569H522V768H504V751H516z" />
      <path d="M760 527h14V638h29v5h-43zM926 542h14v72h-6v-49h-8zM934 676h13v17h-13zM786 771h18v18h-18zM934 771h17v18h-17zM623 702h6v67h-6zM710 702h7v67h-7z" />
    </g>
    <path d="M941 535h22v7h-22z" fill="#a9a9a9" stroke="#1b2a90" strokeWidth="1.500" /><path d="M948 536v5M952 536l4 5M956 536l-4 5" stroke="#111" />
    <path d="M522 569V783M522 627H623V640M665 645H623M804 548V783M522 783H786M934 614V771" stroke="#c22a55" />
    <path d="M948 676V771M926 535h34v7M951 765h9v24h-9" stroke="#2c52d8" strokeWidth="1.200" />
    <path d="M511 696V567q0-8 8-8H571V548q4-11 14-11H744V521H778M515 696H495V734H511M501 734V782q2 11 12 11H706" stroke={MG} />
    <path d="M575 558q2-14 14-16h34M580 558q3-9 12-11" stroke="#6f9c6a" />
    <path d="M585 551h24v8h-24zM585 551l24 8" stroke={YL} /><path d="M611 550h6v7h-6z" stroke="#0f8f7a" strokeWidth="1.500" />
    <path d="M524 574v18" stroke="#18d818" strokeWidth="4" /><path d="M747 554v22" stroke="#18d818" strokeWidth="2" />
    <path d="M523 596h7v9h-7zM523 596l7 9M530 596l-7 9M749 572h9v9h-9zM749 572l9 9M758 572l-9 9M753 584v25h6" stroke="#f03050" />
    <path d="M824 548v24M824 616v26M523 611h5v12h-5M752 550h5v18h-5" stroke={MG} />
    <path d="M678 639h28v5h-28zM661 645v28h4v-28zM680 675h28v4h-28zM772 675h26v4h-26z" fill="#a9a9a9" stroke="#111" />

    {/* lower terrace */}
    <path d="M713 789H934V867H727q-12 0-12-12z" fill="url(#dots)" stroke="none" />
    <rect x="804" y="790" width="130" height="42" fill="#a9a9a9" stroke="none" />
    <path d={vlines(range(804, 934, 17.3), 790, 832) + hlines([798, 807, 815, 824, 832], 804, 934)} stroke={INK} strokeWidth="0.800" />
    <path d="M783 790V838H934M790 790V832H934" stroke={MG} strokeDasharray="4 1.500" />
    <path d="M713 809V857q0 16 16 16H924q16 0 16-16V789M710 809V858q0 15 16 15" stroke="#222" /><path d="M716 809V855q0 14 14 14H921q16 0 16-15V789" stroke="#222" />
    <path d="M706 809V858q0 20 20 20H928q20 0 20-20V789" stroke="#7fdc3c" />
    <path d="M705 789h17v20h-17z" stroke={MG} />
    <path d="M880 548V868M804 795H934" stroke={AX} /><Dim v x={880} y={660} t="13007.1" /><Dim v x={880} y={765} t="13460" /><Dim x={872} y={795} t="6007.7" /><Dim v x={880} y={840} t="2480" />
    <g fill="#12c22b" stroke="none"><circle cx="923" cy="421" r="2" /><circle cx="943" cy="419" r="2" /><circle cx="1004" cy="486" r="2" /><circle cx="788" cy="793" r="2" /><circle cx="932" cy="824" r="2" /><circle cx="720" cy="811" r="2" /><circle cx="610" cy="597" r="2" /></g>
    <path d="M526 605H622M595 560V622M720 580V640M780 601H824M665 658H933" stroke={AX} />
    <Dim x={542} y={605} t="660" /><Dim x={570} y={605} t="1200" /><Dim x={604} y={605} t="1200" /><Dim x={800} y={601} t="600" /><Dim x={800} y={657} t="6007.6" /><Dim x={672} y={657} t="560" />
  </g>
);

const Annotations = () => (
  <g>
    <g stroke={YL}>
      <path d="M512 497H541V583M566 497H596V580M636 497H667V602" />
      <path d="M687 427H812M687 445H812V580M699 462H812M699 479H728V608M699 495H728M699 514H728" />
      <path d="M1087 434H1037M968 705H995M989 737H912M989 812H912M663 853H693V700M729 937H758V696M758 937V952H707M470 678H542M696 965H630l-10 6" />
      <path d="M855 657L580 627M855 657H632M855 657L700 676M855 657L798 680M855 657h16" />
    </g>
    <Note x={515} y={495} t="瓷砖(防滑)" sub="▼H-0.020" /><Note x={568} y={495} t="瓷砖(防滑)" sub="▼H-0.020" /><Note x={638} y={495} t="复合木地板" sub="▼H±0.000" />
    <Note x={688} y={426} t="陶土混凝土(专500)" /><Note x={690} y={444} t="水泥砂浆找平" sub="▼H-0.070" />
    <Note x={700} y={461} t="瓷砖" sub="▼H-0.020" /><Note x={700} y={478} t="瓷砖(防滑)" sub="▼H-0.020" /><Note x={700} y={494} t="瓷砖(防滑)" sub="▼H-0.020" /><Note x={700} y={513} t="石材" sub="▼H±0.000" />
    <Note x={1067} y={433} t="防腐砖" sub="▼H-0.020" /><Note x={968} y={704} t="石材" sub="▼H±0.000" /><Note x={966} y={736} t="瓷砖" sub="▼H±0.000" /><Note x={966} y={811} t="防滑砖" sub="▼H-0.020" />
    <Note x={664} y={852} t="复合木地板" sub="▼H±0.000" /><Note x={730} y={936} t="复合木地板" sub="▼H±0.000" /><Note x={709} y={952} t="陶土混凝土(专500)" /><Note x={471} y={677} t="复合木地板" sub="▼H±0.000" /><Note x={655} y={964} t="防滑砖" /><Note x={868} y={660} t="踢脚线" />
    <Tag x={490} y={493} t="ST 01" /><Tag x={543} y={493} t="CT 01" /><Tag x={614} y={493} t="WF 01" />
    <Tag x={676} y={458} /><Tag x={676} y={475} /><Tag x={676} y={491} /><Tag x={676} y={510} t="ST 01" />
    <Tag x={1087} y={430} t="CT 03" /><Tag x={944} y={701} t="ST 01" /><Tag x={989} y={733} /><Tag x={989} y={808} t="CT 03" /><Tag x={640} y={849} t="WF 01" /><Tag x={707} y={933} t="WF 01" /><Tag x={672} y={961} t="CT 03" /><Tag x={446} y={674} t="WF 01" />
    <path d="M487 589H530M550 545V582M738 520V557M845 587H818v10M783 558H755M692 622v28h-9M736 634v14h9M845 755V797h-8M573 640V614h9M632 659h32M864 382V417M892 382V451M890 884V859h7M919 884V826h6M864 417h-7M892 451h-7M692 688v-16h8M776 688v-16h8M934 640v10h5" stroke={BL} strokeWidth="1.500" />
    {[[487, 589, 0], [550, 536, -90], [738, 510, -90], [692, 613, 90], [736, 626, -90], [783, 558, 180], [796, 578, 0], [845, 587, 0], [907, 644, 180], [573, 649, -90], [632, 659, 0], [692, 696, -90], [776, 696, -90], [845, 745, 90]].map(([x, y, d]) => <Marker key={`${x}-${y}`} x={x} y={y} dir={d} />)}
    <Marker x={864} y={373} t="A" dir={90} /><Marker x={892} y={373} t="B" dir={90} /><Marker x={890} y={892} t="A" dir={-90} /><Marker x={919} y={892} t="B" dir={-90} />
  </g>
);

const Details = () => (
  <g>
    <rect x="584.500" y="953" width="60.500" height="54" stroke={BL} strokeWidth="1.500" />
    <path d="M586 977h32v29h-32z" fill="url(#diag)" stroke="none" /><path d="M618 991h26v15h-26z" fill="url(#speck)" stroke="none" />
    <path d="M602 972h22v18" stroke="#33d61c" strokeWidth="5" /><path d="M628 970v20" stroke={YL} strokeWidth="3" />
    <path d="M588 955v17M592 955v17M597 955v17M586 974h16" stroke={CY} /><path d="M602 966h24M632 970v22" stroke={AX} />
    <Dim x={614} y={963} t="窗台板详图" />
    <circle cx="584" cy="1018" r="8" stroke={YL} /><path d="M576 1018h70" stroke={YL} />
    <g fill={YL} stroke="none"><text x="581" y="1021" fontSize="7">A</text><text x="593" y="1016" fontSize="8">窗台节点图</text><text x="593" y="1024" fontSize="6">SCALE 1:10</text></g>

    <rect x="795" y="912" width="151" height="110" stroke={BL} strokeWidth="1.500" />
    <path d="M840 945h17v55h-17zM859 989h50v11h-50zM826 944h14v13h-14z" fill="url(#diag)" stroke="#4b3038" />
    <path d="M840 945h17v55h-17zM859 989h50v11h-50z" fill="url(#marble)" stroke="none" opacity="0.500" />
    <path d="M819 938h58M819 938v64h90" stroke="#4b3038" strokeWidth="1.200" />
    <path d="M857 938h53v4h-53z" fill="#1c4b50" stroke="none" /><path d="M826 938h30v6h-30zM884 944h11v40h-11z" fill="url(#speck)" stroke="none" />
    <path d="M862 945l2 39h20l1-39" stroke="#2c52d8" strokeWidth="1.500" /><path d="M909 938v64M826 935v20" stroke="#20c838" />
    <path d="M866 984h16M870 988v14q12 6 24 0M878 988v8h10" stroke={GLASS} strokeWidth="2" />
    <path d="M860 926h28M854 934h36M862 985h34M857 944h32" stroke="#9a3c3c" />
    <path d="M901 926h38M922 947h16M925 952h14M913 957h26M918 963h20M912 971h27M905 977h32M926 982h12M922 988h17M910 999h20M905 1006h26M902 1013h29M862 1014h28M820 1006h38M848 1011h11M811 965h16M800 970h27M814 975h13" stroke={YL} strokeWidth="3" />
    <path d="M888 944l12-18M895 948h24M888 957h24M893 965h20M897 972l15-1M897 982h28M834 940v36M865 986v24M890 985l14 28" stroke={YL} />
    <path d="M903 980h6v8h-6zM854 946v6" stroke={MG} strokeWidth="1.500" />
    <Dim x={874} y={926} t="200" /><Dim x={860} y={933} t="40 60" /><Dim x={876} y={933} t="220" /><Dim v x={820} y={943} t="60" />
    <path d="M798 1001V1018H815M796 1006l2-5 2 5M810 1016l5 2-5 2" stroke="#111" /><text x="817" y="1021" fontSize="6" fill="#111" stroke="none">X</text><text x="797" y="999" fontSize="6" fill="#111" stroke="none">Y</text>

    <g fill="#31524f" stroke="none"><text x="1058" y="1021" fontSize="12">平面布置图</text><text x="1130" y="1021" fontSize="9">1:50</text><rect x="1058" y="1024" width="90" height="2" /></g>
    <path d={hlines([970, 986, 995, 1004, 1011, 1020], 317, 497) + "M351 970V1026M467 970V1026M497 970V1026"} stroke="#5a779c" />
    <g fill="#f0706c" stroke="none" fontSize="5"><text x="327" y="981">图例</text><text x="403" y="981">名 称</text><text x="474" y="981">备注</text><text x="368" y="993">强化地板</text><text x="368" y="1002">防滑地砖</text><text x="368" y="1010">石材</text><text x="368" y="1018">陶粒混凝土回填</text><text x="474" y="1002">600x600</text><text x="368" y="1025">门槛石</text></g>
    <path d="M333 986v10M328 1000h12M333 1006v3M331 1013h4M331 1024h4" stroke="#18d818" strokeWidth="2" />
    <path d="M338.500 1003V902M331 922l7.500-20 7.500 20M338.500 1003.500H439M420 996l19 7.500-19 8M329.500 995.500h17v17h-17zM331 867l7.500 10 7.500-10M338.500 877v10M459 994l13 20M472 994l-13 20" stroke="#111" />
    <g fill="#222" stroke="none" fontSize="24" fontFamily="Noto Sans CJK SC" fontWeight="100">
      <text x="317" y="374">[</text><text x="356" y="374">][</text><text x="386" y="374" fontSize="23">俯视</text><text x="431" y="374">][</text><text x="461" y="374" fontSize="23">二维线框</text><text x="555" y="374">]</text>
    </g>
    <path d="M332 366h19M341.500 357v18" stroke="#222" />
  </g>
);

const Drawing = () => (
  <svg viewBox="8 327 1454 699" preserveAspectRatio="xMinYMin slice" fill="none" strokeWidth={1} fontFamily="Roboto, Noto Sans CJK SC, sans-serif" role="img" aria-label="平面布置图">
    <Patterns />
    <Sheet />
    <Axes />
    <Plan />
    <Annotations />
    <Details />
  </svg>
);

/* ---------- content ---------- */

const disk = (x: number, y: number, k: number) => (
  <g transform={`translate(${x} ${y}) scale(${k})`}>
    <path d="M0 0h20v20H0z" fill="#8fbbee" stroke={c.bg} /><path d="M4 1h12v9H4z" fill="#d6e8fb" stroke="none" /><path d="M5 13h10v7H5z" fill="#fff" stroke="none" /><path d="M7 15h3v5H7z" fill="#41659a" stroke="none" />
  </g>
);
const newSheet = (<><path d="M2 4h17l7 6v14H2z" fill="#fff" stroke="none" /><path d="M19 4v6h7z" fill="#7cc4ee" stroke={c.bg} /><path d="M13 9v10M8 14h10" stroke={c.sky} strokeWidth={2} /></>);

const quick: [string, ReactNode][] = [
  ["新建", newSheet],
  ["打开", <><path d="M2 4h9l2 3h13v4H2z" fill="#fbdc8c" stroke="none" /><path d="M2 8h24v17H2z" fill="#f8b95c" stroke="none" /></>],
  ["保存", disk(4, 4, 1)],
  ["另存为", <>{disk(3, 4, 1)}<path d="M15 24l8-12" stroke="#e98b3a" strokeWidth={4} /></>],
  ["全部保存", <>{disk(1, 1, 0.7)}{disk(6, 6, 0.7)}{disk(12, 12, 0.75)}</>],
  ["打印", <><path d="M7 2h14v6H7z" fill={c.pale} stroke="none" /><path d="M2 8h24v12H2z" fill="#4aa5e8" stroke="none" /><path d="M7 14h14v11H7z" fill="#fff" stroke="none" /></>],
  ["打印预览", <><path d="M9 2H3v6M19 2h6v6M3 19v6h6M25 19v6h-6" stroke={c.sky} strokeWidth={2} /><path d="M8 9h12v8H8z" fill="#4aa5e8" stroke="none" /><path d="M10 12h8v10h-8z" fill="#fff" stroke="none" /></>],
  ["撤销", <path d="M12 3L2 11l10 8v-5c6 0 8 2 9 9h4c1-12-4-15-13-15z" fill="#71baf3" stroke="none" />],
];

const menus: [string, string][] = [["文件", "F"], ["编辑", "E"], ["视图", "V"], ["插入", "I"], ["格式", "O"], ["工具", "T"], ["绘图", "D"], ["标注", "N"], ["修改", "M"], ["扩展工具", "X"], ["参数化", "P"], ["窗口", "W"], ["帮助", "H"]];
const tabs = ["常用", "实体", "注释", "插入", "参数化", "视图", "工具", "管理", "输出", "扩展工具", "在线", "端云协同"];

const statusIcons: [string, boolean, ReactNode][] = [
  ["捕捉模式", false, <><path d="M3 3h20v22H3zM10 3v22M16 3v22M3 10h20M3 17h20" strokeWidth={2} stroke="#fff" /><path d="M24 3v23H3" stroke={c.sky} strokeWidth={3} /></>],
  ["栅格显示", false, <><path d="M4 3h20v22H4z" strokeWidth={2} stroke="#fff" /><path d="M10 3v22M17 3v22M4 10h20M4 17h20" stroke={c.sky} strokeWidth={2} /></>],
  ["正交模式", false, <><path d="M4 3v21h20" strokeWidth={2} stroke="#fff" /><path d="M4 15h8v9" stroke={c.sky} strokeWidth={2} /></>],
  ["极轴追踪", true, <><circle cx="14" cy="15" r="10" strokeWidth={2} /><path d="M23 4L13 16h12M18 10q4 2 4 6" stroke={c.sky} strokeWidth={2} /></>],
  ["对象捕捉", true, <><path d="M11 5h14v19H5V11" strokeWidth={2} stroke="#fff" /><path d="M3 2h7v8H3z" stroke={c.red} strokeWidth={2} /></>],
  ["对象追踪", true, <><path d="M24 4L4 24h22" strokeWidth={2} /><path d="M11 11h5v5h-5z" fill={c.accent} stroke={c.sky} strokeWidth={1.5} /></>],
  ["动态坐标", true, <><path d="M5 3v21h20M5 24L20 5M3 5l2-3 2 3M23 22l3 2-3 2" /><path d="M18 4l-5 9h5l-3 9 9-12h-5l3-6z" fill={c.orange} stroke="none" /></>],
  ["动态输入", true, <><path d="M7 4v14M1 11h12" strokeWidth={2} stroke="#fff" /><path d="M11 17h13v6H11z" stroke={c.sky} strokeWidth={2} /></>],
  ["线宽", false, <><path d="M3 6h22" strokeWidth={2} stroke="#fff" /><path d="M3 13h22" strokeWidth={3} stroke="#fff" /><path d="M3 21h22" strokeWidth={5} stroke="#fff" /></>],
  ["透明度", true, <rect x="5" y="4" width="18" height="20" rx="2" fill="#9a9a9a" stroke="#c0bcb4" />],
  ["快捷特性", false, <><path d="M7 3v12M1 9h12" strokeWidth={2} stroke="#fff" /><rect x="11" y="13" width="8" height="9" fill="#fff" stroke="none" /><rect x="15" y="17" width="8" height="8" stroke={c.sky} strokeWidth={2} /></>],
  ["选择循环", true, <><circle cx="14" cy="14" r="9" strokeDasharray="9 4" /><path d="M3 3l22 23M25 3L3 26" stroke={c.pale} /><path d="M1 1l7 3-4 4zM27 1l-7 3 4 4zM1 27l7-3-4-4zM27 27l-7-3 4-4z" fill={c.cyan} stroke="none" /></>],
  ["注释监视", true, <><path d="M9 2h13v16H9zM13 2v8M18 2v14M9 6h13M9 11h13" stroke="#fff" /><path d="M4 10h13v13H4z" fill="#2c6a9c" stroke={c.sky} strokeWidth={3} strokeDasharray="3 1" /><path d="M8 14h5v5H8z" stroke={c.sky} /><path d="M25 14v8h-6M21 19l-3 3 3 3" stroke={c.orange} strokeWidth={2} /></>],
];

const leaf = (x: number, y: number) => <path d={`M${x} ${y}q5 7 2 11q6 0 9 9q-7 2-11-3q-4 5-11 3q3-9 9-9q-3-4 2-11z`} fill="#a8e6f7" stroke="none" />;
const rightStatus: [string, ReactNode][] = [
  ["注释比例", <><path d="M4 3h18M4 3v18h4M10 6v10M15 6v6h5" strokeWidth={1.2} /><path d="M24 3L3 26" />{leaf(18, 8)}</>],
  ["注释可见性", <>{leaf(12, 2)}<circle cx="22" cy="17" r="5" fill={c.pale} stroke={c.accent} /><path d="M22 22v3" strokeWidth={3} /></>],
  ["自动缩放", <>{leaf(16, 3)}<path d="M10 2l-6 8h7l-4 8" stroke={c.pale} strokeWidth={2} /></>],
  ["隔离对象", <><path d="M15 8H3v15h8" strokeWidth={1.2} /><circle cx="21" cy="8" r="5" strokeWidth={1.2} /><path d="M17 15l6 6-6 6-6-6z" strokeWidth={1.2} /></>],
  ["设置", <><circle cx="14" cy="14" r="7" stroke={c.sky} strokeWidth={3} /><circle cx="14" cy="14" r="10" stroke={c.sky} strokeWidth={4} strokeDasharray="3.850 4" /></>],
  ["全屏", <path d="M3 9V3h6M3 3l8 8M19 3h6v6M25 3l-8 8M3 19v6h6M3 25l8-8M25 19v6h-6M25 25l-8-8" />],
];

const Lock = ({ size }: { size: number }) => (
  <Ico size={size} box={28}><path d="M7 13V9q0-7 7-7t7 7v4" stroke={c.red} strokeWidth={3} /><rect x="4" y="12" width="20" height="14" rx="1" fill={c.red} stroke="none" /><path d="M14 17v6" stroke="#fff" strokeWidth={3} /><circle cx="14" cy="17" r="2.500" fill="#fff" stroke="none" /></Ico>
);

type Prop = { id: string; label: ReactNode; value: string; kind?: "select" | "text" | "dim"; lead?: ReactNode };
const groups: { name: string; rows: Prop[] }[] = [
  { name: "基本", rows: [
    { id: "color", label: "颜色", value: "241,235,31", kind: "select", lead: <Swatch /> },
    { id: "layer", label: "图层", value: "F-地面填充", kind: "select" },
    { id: "ltype", label: "线型", value: "随层", kind: "select", lead: <LineSlot $len={71} /> },
    { id: "lscale", label: "线型比例", value: "10", kind: "text" },
    { id: "lweight", label: "线宽", value: "随层", kind: "select", lead: <LineSlot $len={80} $thick /> },
    { id: "alpha", label: "透明度", value: "ByLayer", kind: "text" },
    { id: "thick", label: "厚度", value: "0", kind: "text" },
  ] },
  { name: "视图", rows: [
    { id: "cx", label: "中心点 X", value: "9374260", kind: "dim" },
    { id: "cy", label: "中心点 Y", value: "15962670", kind: "dim" },
    { id: "cz", label: "中心点 Z", value: "0", kind: "dim" },
    { id: "h", label: "高度", value: "24000", kind: "dim" },
    { id: "w", label: "宽度", value: "29340", kind: "dim" },
  ] },
  { name: "其他", rows: [
    { id: "ascale", label: "注释比例", value: "1:1", kind: "select" },
    { id: "ucs", label: <>打开 UC<Ellipsis>⋯</Ellipsis></>, value: "是", kind: "select" },
    { id: "origin", label: <>在原点<Ellipsis>⋯</Ellipsis></>, value: "否", kind: "select" },
  ] },
];

const PropRow = ({ p }: { p: Prop }) => (
  <Row>
    <label htmlFor={p.id}>{p.label}</label>
    <Field $flat={p.kind !== "select"}>
      {p.lead}
      {p.kind === "select" ? (
        <><Select id={p.id}><option>{p.value}</option></Select><Caret /></>
      ) : (
        <Value id={p.id} defaultValue={p.value} disabled={p.kind === "dim"} />
      )}
    </Field>
  </Row>
);

const RibbonArea = () => (
  <Ribbon>
    <Panel $w={445}>
      <PanelBody>
        <Big w={78} label="直线" icon={bigIcons.line} />
        <Big w={80} label="多段线" icon={bigIcons.polyline} />
        <Big w={80} label="圆" icon={bigIcons.circle} />
        <Big w={58} label="圆弧" icon={bigIcons.arc} />
        <SmallGrid $cols="40px 20px 44px 32px" $left={11}>
          <Small label="圆形" icon={s.circle2} /><More label="圆形" /><Small label="样条曲线" icon={s.spline} /><Small label="面域" icon={s.region} />
          <Small label="点" icon={s.points} /><More label="点" /><Small label="螺旋" icon={s.helix} /><Small label="边界" icon={s.boundary} />
          <Small label="填充" icon={s.hatch} /><More label="填充" /><Small label="修订云线" icon={s.cloud} /><Small label="圆环" icon={s.donut} />
        </SmallGrid>
      </PanelBody>
      <Caption>绘图</Caption>
    </Panel>
    <Panel $w={492}>
      <PanelBody>
        <Big w={78} label="移动" icon={bigIcons.move} />
        <Big w={60} label="复制" icon={bigIcons.copy} />
        <Big w={78} label="拉伸" icon={bigIcons.stretch} />
        <Big w={60} label="圆角" icon={bigIcons.fillet} />
        <SmallGrid $cols="40px 20px 46px 30px" $left={8}>
          <Small label="修剪" icon={s.trim} /><More label="修剪" /><Small label="偏移" icon={s.offset} /><Small label="编辑多段线" icon={s.editPoly} />
          <Small label="阵列" icon={s.array} /><More label="阵列" /><Small label="对齐" icon={s.align} /><Small label="编辑样条曲线" icon={s.editSpline} />
          <Small label="绘图次序" icon={s.order} /><More label="绘图次序" /><Small label="分解" icon={s.explode} /><Small label="编辑填充" icon={s.editHatch} />
        </SmallGrid>
        <Big w={74} label="删除" icon={bigIcons.erase} menu={false} />
      </PanelBody>
      <Caption>修改</Caption>
    </Panel>
    <Panel $w={185}>
      <PanelBody>
        <Big w={122} label="多行文字" icon={bigIcons.mtext} />
        <SmallGrid $cols="40px 20px">
          <Small label="标注" icon={s.dim} /><More label="标注" />
          <Small label="引线" icon={s.leader} /><More label="引线" />
          <Small label="表格" icon={s.table} /><More label="表格" />
        </SmallGrid>
      </PanelBody>
      <Caption>注释</Caption>
    </Panel>
    <Panel $w={460}>
      <PanelBody>
        <Big w={122} label="图层特性" icon={bigIcons.layers} menu={false} />
        <LayerArea>
          <LayerGrid>{layerIcons.map(([l, i]) => <Small key={l} label={l} icon={i} />)}</LayerGrid>
          <Field $h={34}>
            <svg width="110" height="34" viewBox="0 0 110 34" fill="none" aria-hidden="true">
              <ellipse cx="16" cy="14" rx="10" ry="10" fill={c.orange} /><path d="M12 22h8v5h-8z" fill={c.orange} />
              <circle cx="41" cy="16" r="4" fill={c.orange} /><circle cx="41" cy="16" r="8.500" stroke={c.orange} strokeWidth="4" strokeDasharray="3 3.670" />
              <path d="M56 15V9q0-5 5-5t5 5v9" stroke="#6fb7ea" strokeWidth="2.500" /><path d="M61 15h16v13H61z" fill="#6fb7ea" /><path d="M69 19v6" stroke={c.bg} strokeWidth="3" />
              <path d="M81 7h18v18H81z" fill="#2b2b2b" />
            </svg>
            <Select aria-label="当前图层"><option>F-地面填充</option></Select>
            <Caret />
          </Field>
        </LayerArea>
      </PanelBody>
      <Caption>图层</Caption>
    </Panel>
    <Panel $w={116}>
      <PanelBody>
        <Big w={78} label="插入" icon={bigIcons.insert} menu={false} />
        <SmallGrid $cols="38px">
          <Small label="创建块" icon={<><path d="M10 22H4V4h16v4" /><circle cx="19" cy="18" r="7" /><Node x={4} y={4} s={3} /></>} />
          <Small label="编辑块" icon={<><path d="M8 5H4v18h18v-4M12 5h10v6" /><Pen d="M15 22L25 11" /></>} />
          <Small label="块属性" icon={<><Sun x={7} y={6} r={2} fill={c.yellow} /><path d="M15 7h11M14 15h12M14 23h12" /><path d="M5 13h4v4H5zM5 21h4v4H5z" stroke={c.sky} /></>} />
        </SmallGrid>
      </PanelBody>
      <Caption>块</Caption>
    </Panel>
    <Panel>
      <PanelBody>
        <PropFields>
          <Ico size={24} box={28}><path d="M14 3C0 3 0 24 11 24c4 0 2-5 4-6 4-2 10 2 11-5C26 7 20 3 14 3z" strokeWidth={2} /><circle cx="8" cy="10" r="2.500" fill={c.sky} stroke="none" /><circle cx="14" cy="7" r="2.500" fill={c.red} stroke="none" /><circle cx="20" cy="10" r="2.500" fill={c.green} stroke="none" /><circle cx="9" cy="17" r="2.500" fill={c.orange} stroke="none" /></Ico>
          <Field $h={32}><Swatch /><Select aria-label="颜色"><option>241,235,31</option></Select></Field>
          <Ico size={24}><path d="M1 3h22" stroke="#fff" strokeWidth={2} /><path d="M1 8h22" stroke="#fff" strokeWidth={3} /><path d="M1 14h22" stroke="#fff" strokeWidth={4} /><path d="M1 21h22" stroke="#fff" strokeWidth={5} /></Ico>
          <Field $h={32}><LineSlot $len={80} /><Select aria-label="线宽"><option>随层</option></Select></Field>
          <Ico size={24}><path d="M1 2h22" stroke="#fff" strokeWidth={2} /><path d="M1 7h22" stroke="#fff" strokeWidth={2} strokeDasharray="9 2" /><path d="M1 12h22M1 22h22" stroke="#fff" strokeWidth={2} strokeDasharray="4 2" /><path d="M1 17h22" stroke="#fff" strokeWidth={2} strokeDasharray="2 2" /></Ico>
          <Field $h={32}><LineSlot $len={71} $thick /><Select aria-label="线型"><option>随层</option></Select></Field>
        </PropFields>
      </PanelBody>
      <Caption />
    </Panel>
    <ScrollRight aria-label="更多面板">
      <svg width="16" height="66" viewBox="0 0 16 66" fill="none" stroke="#a3adba" strokeWidth="2" aria-hidden="true"><path d="M2 1l12 32L2 65" /></svg>
    </ScrollRight>
  </Ribbon>
);

export default function App() {
  const [tab, setTab] = useState("常用");
  const [layout, setLayout] = useState("布局1");
  return (
    <Page>
      <Global />
      <Header>
        <Logo>
          <svg width="76" height="76" viewBox="0 0 76 76" fill="none" aria-hidden="true">
            <defs><linearGradient id="brand" x1="0" y1="0" x2="0" y2="1"><stop offset="0" stopColor="#3d45f0" /><stop offset="1" stopColor="#4060f2" /></linearGradient></defs>
            <circle cx="25" cy="15" r="10" fill="url(#brand)" /><circle cx="10" cy="58" r="10" fill="#4b8ff5" /><path d="M24 20L12 54" stroke="#3f63f2" strokeWidth="6" />
            <path d="M30 49l9-8" stroke="#3f75f4" strokeWidth="6" strokeLinecap="round" /><path d="M45 37v30" stroke="#4a8df6" strokeWidth="7" strokeLinecap="round" /><path d="M52 63l22-19" stroke="#55a8f6" strokeWidth="6" />
          </svg>
        </Logo>
        <HeadRows>
          <TopRow>
            <QuickBar>
              {quick.map(([l, i]) => <QuickButton key={l} aria-label={l}><Ico size={28}>{i}</Ico></QuickButton>)}
              <QuickButton $narrow aria-label="撤销列表"><Triangle $small /></QuickButton>
              <QuickButton aria-label="重做"><Ico size={28}><path d="M16 3l10 8-10 8v-5c-6 0-8 2-9 9H3C2 11 7 8 16 8z" fill="#c9c9cb" stroke="none" /></Ico></QuickButton>
              <QuickButton $narrow aria-label="自定义"><Triangle $small /></QuickButton>
            </QuickBar>
            <Title>中望CAD 个人版 (功能受限) - [/storage/Users/currentUser/Download/com.dingtalk.hmos/奇数层户型平面系统.d<Ellipsis>⋯</Ellipsis></Title>
            <Login>
              <Ico size={30}><circle cx="15" cy="9" r="7" fill="#5a5a5c" stroke="none" /><path d="M2 28q0-12 13-12t13 12z" fill="#5a5a5c" stroke="none" /></Ico>
              登录
            </Login>
          </TopRow>
          <MenuBar>{menus.map(([t, k]) => <MenuItem key={k}>{t}(<u>{k}</u>)</MenuItem>)}</MenuBar>
        </HeadRows>
      </Header>
      <Tabs>
        {tabs.map((t) => <Tab key={t} $on={t === tab} onClick={() => setTab(t)}>{t}</Tab>)}
        <Collapse aria-label="收起功能区"><Triangle $up $small /></Collapse>
      </Tabs>
      <RibbonArea />
      <Work>
        <Left>
          <DocBar>
            <DocMenu aria-label="文档列表"><Triangle $small /></DocMenu>
            <DocTab>
              <DocName><Lock size={22} />奇数层...系统.dwg*</DocName>
              <button aria-label="关闭文档"><Cross /></button>
            </DocTab>
            <NewDoc $w={38} $h={30} aria-label="新建文档"><Ico size={26} box={28}>{newSheet}</Ico></NewDoc>
          </DocBar>
          <Canvas>
            <Drawing />
            <WinButtons>
              <button aria-label="最小化"><Ico size={20}><path d="M1 13h18v5H1z" fill="#bbb" stroke="#444" strokeWidth={1} /></Ico></button>
              <button aria-label="还原"><Ico size={20}><path d="M6 2h12v12H6zM2 6h12v12H2zM6 10h4v4H6z" stroke="#444" /></Ico></button>
              <button aria-label="关闭"><Cross color="#77787a" /></button>
            </WinButtons>
          </Canvas>
          <LayoutBar>
            <SquareBtn $w={24} $h={35} aria-label="布局列表"><Triangle $up $small /></SquareBtn>
            {["模型", "布局1", "布局2"].map((t) => <LayoutTab key={t} $on={t === layout} onClick={() => setLayout(t)}>{t}</LayoutTab>)}
            <NewLayout $w={38} $h={26} aria-label="新建布局"><Ico size={20}><path d="M8 2h4v6h6v4h-6v6H8v-6H2V8h6z" fill="#8b8f95" stroke="#4b5058" strokeWidth={1} /></Ico></NewLayout>
          </LayoutBar>
          <Command>
            <CommandSide><SquareBtn $w={38} $h={38} aria-label="关闭命令行"><Cross /></SquareBtn></CommandSide>
            <CommandBody>
              <History>
                <Lines>
                  <p>视口为锁定视图。切换到图纸空间。</p>
                  <p>切换回模型空间。</p>
                  <p>命令:</p>
                  <p>视口为锁定视图。切换到图纸空间。</p>
                  <p>切换回模型空间。</p>
                </Lines>
                <Scroll $w={15}>
                  <ScrollBtn aria-label="向上"><Chevron up /></ScrollBtn>
                  <Spring $n={62} />
                  <Thumb $size={28}><Grip /></Thumb>
                  <ScrollBtn aria-label="向下"><Chevron /></ScrollBtn>
                </Scroll>
              </History>
              <Prompt>命令:<input aria-label="命令输入" /></Prompt>
            </CommandBody>
          </Command>
        </Left>
        <Props>
          <PropsTitle><h2>特性</h2><SquareBtn $w={37} $h={38} aria-label="关闭特性"><Cross /></SquareBtn></PropsTitle>
          <PickRow>
            <Field $blue $h={33}><Select aria-label="选择对象"><option>无选择</option></Select><Caret /></Field>
            <SquareBtn $w={32} $h={33} aria-label="切换选择"><Ico size={26} box={28}><path d="M8 18H3V3h15v4M20 10h5v15H10v-4" /><path d="M8 7h13v14H8z" /><path d="M14 10v8M10 14h8" stroke={c.orange} strokeWidth={2} /></Ico></SquareBtn>
            <SquareBtn $w={32} $h={33} aria-label="选择对象"><Ico size={26} box={28}><circle cx="9" cy="15" r="7" /><path d="M9 2h14v12H9z" fill={c.sky} stroke={c.pale} /><path d="M15 9v15l4-3 3 6 3-1-3-6h5z" fill={c.accent} stroke="#fff" /></Ico></SquareBtn>
            <SquareBtn $w={32} $h={33} aria-label="快速选择"><Ico size={28}><path d="M3 6v12l3-3 2 5 2-1-2-5h3z" strokeWidth={1.2} /><path d="M23 3L12 15h6l-3 10 11-13h-6z" fill={c.yellow} stroke="none" /></Ico></SquareBtn>
          </PickRow>
          <PropsBody>
            <Groups>
              {groups.map((g, i) => (
                <div key={g.name}>
                  <GroupHead>{g.name}<Triangle /></GroupHead>
                  <Rows $last={i === groups.length - 1}>{g.rows.map((p) => <PropRow key={p.id} p={p} />)}</Rows>
                </div>
              ))}
            </Groups>
            <Scroll $w={24}>
              <ScrollBtn aria-label="向上"><Chevron up /></ScrollBtn>
              <Thumb $size={612}><Grip /></Thumb>
              <Spring $n={108} />
              <ScrollBtn aria-label="向下"><Chevron /></ScrollBtn>
            </Scroll>
          </PropsBody>
          <Rest><CutRow><span>视觉样式</span><span>二维线框</span></CutRow></Rest>
        </Props>
      </Work>
      <Status>
        <Coords>9359115, 15961953, 0</Coords>
        <StatusGroup>
          {statusIcons.map(([l, on, i]) => <StatusBtn key={l} $on={on} aria-label={l}><Ico size={28}>{i}</Ico></StatusBtn>)}
          <StatusBtn aria-label="上一项"><Ico size={20}><path d="M14 5L6 10l8 5" stroke="#999da3" strokeWidth={2} /></Ico></StatusBtn>
          <StatusBtn $flat aria-label="视口最大化"><Ico size={28}><path d="M14 6H5v19h17v-9" stroke="#fff" strokeWidth={2} /><path d="M15 3h10v11" stroke={c.sky} strokeWidth={2} /><path d="M13 17l8-9M16 7h6v6" stroke={c.orange} strokeWidth={2.5} /></Ico></StatusBtn>
          <StatusBtn aria-label="下一项"><Ico size={20}><path d="M6 5l8 5-8 5" stroke="#999da3" strokeWidth={2} /></Ico></StatusBtn>
        </StatusGroup>
        <Spacer />
        <StatusBtn $flat aria-label="视口锁定"><Lock size={26} /></StatusBtn>
        <Scale>0.016667<Triangle /></Scale>
        <StatusGroup>{rightStatus.map(([l, i]) => <StatusBtn key={l} $flat aria-label={l}><Ico size={28}>{i}</Ico></StatusBtn>)}</StatusGroup>
      </Status>
    </Page>
  );
}
